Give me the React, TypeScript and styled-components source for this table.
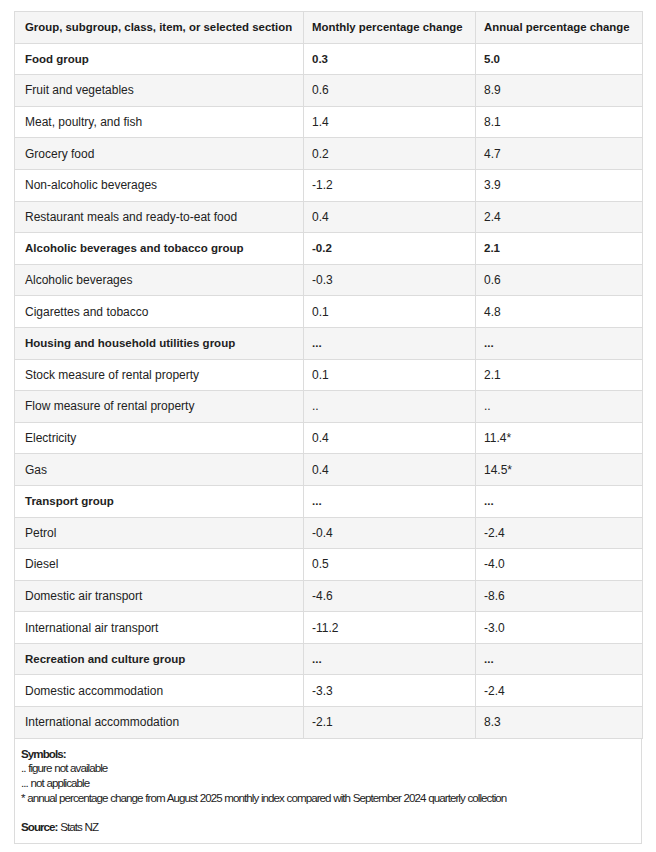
import React from 'react';
import styled, { createGlobalStyle } from 'styled-components';

const GlobalStyle = createGlobalStyle`
  body {
    margin: 0;
    background: #fff;
    font-family: 'Liberation Sans', Arial, sans-serif;
    color: #1a1a1a;
  }
`;

const Wrapper = styled.div`
  padding: 11px 14px 0 14px;
`;

const Table = styled.table`
  width: 628px;
  border-collapse: collapse;
  table-layout: fixed;
  font-size: 12px;
`;

const Row = styled.tr<{ $shade: boolean }>`
  height: 31.6px;
  background: ${(p) => (p.$shade ? '#f5f5f5' : '#fff')};
`;

const Th = styled.th`
  text-align: left;
  font-weight: bold;
  font-size: 11.4px;
  padding: 0 8px;
  border: 1px solid #dcdcdc;
  color: #1a1a1a;
  white-space: nowrap;
  &:first-child {
    padding-left: 10px;
  }
`;

const Td = styled.td<{ $bold?: boolean }>`
  padding: 0 8px;
  border: 1px solid #dcdcdc;
  font-weight: ${(p) => (p.$bold ? 'bold' : 'normal')};
  font-size: ${(p) => (p.$bold ? '11.5px' : '12px')};
  color: #222;
  white-space: nowrap;
  &:first-child {
    padding-left: 10px;
  }
`;

const Footer = styled.div`
  width: 628px;
  box-sizing: border-box;
  border: 1px solid #dcdcdc;
  border-top: none;
  padding: 8px 6px 8px 6px;
  font-size: 11.6px;
  letter-spacing: -0.95px;
  word-spacing: 0.4px;
  line-height: 14.7px;
  color: #222;
`;

const Gap = styled.div`
  height: 15px;
`;

type Item = [string, string, string, boolean?];

const rows: Item[] = [
  ['Food group', '0.3', '5.0', true],
  ['Fruit and vegetables', '0.6', '8.9'],
  ['Meat, poultry, and fish', '1.4', '8.1'],
  ['Grocery food', '0.2', '4.7'],
  ['Non-alcoholic beverages', '-1.2', '3.9'],
  ['Restaurant meals and ready-to-eat food', '0.4', '2.4'],
  ['Alcoholic beverages and tobacco group', '-0.2', '2.1', true],
  ['Alcoholic beverages', '-0.3', '0.6'],
  ['Cigarettes and tobacco', '0.1', '4.8'],
  ['Housing and household utilities group', '...', '...', true],
  ['Stock measure of rental property', '0.1', '2.1'],
  ['Flow measure of rental property', '..', '..'],
  ['Electricity', '0.4', '11.4*'],
  ['Gas', '0.4', '14.5*'],
  ['Transport group', '...', '...', true],
  ['Petrol', '-0.4', '-2.4'],
  ['Diesel', '0.5', '-4.0'],
  ['Domestic air transport', '-4.6', '-8.6'],
  ['International air transport', '-11.2', '-3.0'],
  ['Recreation and culture group', '...', '...', true],
  ['Domestic accommodation', '-3.3', '-2.4'],
  ['International accommodation', '-2.1', '8.3'],
];

const App: React.FC = () => (
  <Wrapper>
    <GlobalStyle />
    <Table>
      <colgroup>
        <col style={{ width: 289 }} />
        <col style={{ width: 172 }} />
        <col style={{ width: 167 }} />
      </colgroup>
      <thead>
        <Row $shade>
          <Th>Group, subgroup, class, item, or selected section</Th>
          <Th>Monthly percentage change</Th>
          <Th>Annual percentage change</Th>
        </Row>
      </thead>
      <tbody>
        {rows.map(([name, monthly, annual, bold], i) => (
          <Row key={name} $shade={i % 2 === 1}>
            <Td $bold={bold}>{name}</Td>
            <Td $bold={bold}>{monthly}</Td>
            <Td $bold={bold}>{annual}</Td>
          </Row>
        ))}
      </tbody>
    </Table>
    <Footer>
      <b>Symbols:</b>
      <div>.. figure not available</div>
      <div>... not applicable</div>
      <div>* annual percentage change from August 2025 monthly index compared with September 2024 quarterly collection</div>
      <Gap />
      <div>
        <b>Source:</b> Stats NZ
      </div>
    </Footer>
  </Wrapper>
);

export default App;
